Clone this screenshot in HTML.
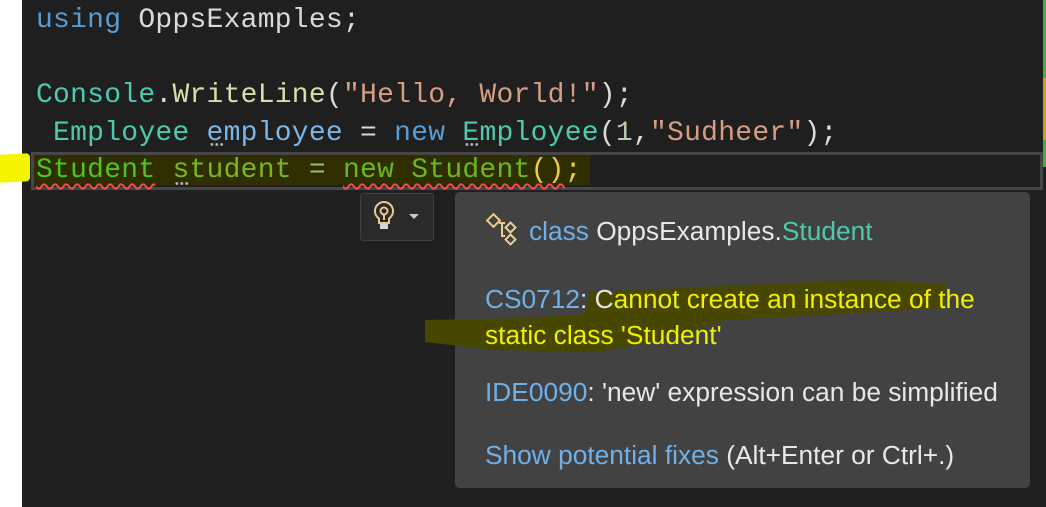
<!DOCTYPE html>
<html><head><style>
body{margin:0;width:1046px;height:507px;overflow:hidden;background:#fff;position:relative;font-family:"Liberation Sans",sans-serif}
#ed{position:absolute;left:22px;top:0;width:1024px;height:507px;background:#1f1f1f}
.ln{position:absolute;left:36px;font-family:"Liberation Mono",monospace;font-size:28px;letter-spacing:0.25px;white-space:pre;line-height:36px}
.kw{color:#569cd6}.ty{color:#4ec9b0}.fn{color:#dcdcaa}.st{color:#d69d85}.id{color:#dadada}.va{color:#9cdcfe}.lv{color:#7ab6e8}
.sq{text-decoration:underline wavy #f14c4c;text-decoration-thickness:1.5px;text-underline-offset:6px}
#pop{position:absolute;left:455px;top:192px;width:575px;height:296px;background:#424242;border-radius:5px}
.pt{position:absolute;left:30px;font-size:26.3px;color:#e8e8e8;white-space:nowrap}
.b{color:#6fb0e8}
.dt{position:absolute;color:#aaa;font-size:11px;letter-spacing:1px}
</style></head><body>
<div id="ed"></div>
<div style="position:absolute;left:0;top:154px;width:30px;height:28px;background:#f5f500;border-radius:0 4px 4px 0;transform:skewY(-3deg)"></div>
<div style="position:absolute;left:31px;top:152px;width:1006px;height:32px;border:3px solid #464646"></div>
<div style="position:absolute;left:34px;top:155px;width:556px;height:30px;background:#2e2e00"></div>
<div style="position:absolute;left:1043px;top:0;width:3px;height:167px;background:#3fae3f"></div>
<div style="position:absolute;left:1043px;top:78px;width:3px;height:62px;background:#c8a020"></div>
<div class="ln" style="top:3px"><span class="kw">using</span> <span class="id">OppsExamples;</span></div>
<div class="ln" style="top:78px"><span class="ty">Console</span><span class="id">.</span><span class="fn">WriteLine</span><span class="id">(</span><span class="st">"Hello, World!"</span><span class="id">);</span></div>
<div class="ln" style="top:116px"><span class="ty"> Employee</span> <span class="lv">employee</span> <span class="id">=</span> <span class="kw">new</span> <span class="ty">Employee</span><span class="id">(</span><span style="color:#b5cea8">1</span><span class="id">,</span><span class="st">"Sudheer"</span><span class="id">);</span></div>
<div class="ln" style="top:153px"><span class="sq" style="color:#4ec41e">Student</span> <span style="color:#7ab61e">student</span> <span class="id" style="color:#9fbe6e">=</span> <span class="sq" style="color:#6ab81e">new Student<span style="color:#e8d040">()</span></span><span style="color:#e8d040">;</span></div>
<div class="dt" style="left:210px;top:139px">•••</div>
<div class="dt" style="left:465px;top:139px">•••</div>
<div class="dt" style="left:175px;top:178px">•••</div>
<div style="position:absolute;left:360px;top:193px;width:72px;height:46px;background:#2a2a2a;border:1px solid #3e3e3e;border-radius:3px"></div>
<svg style="position:absolute;left:368px;top:198px" width="60" height="36" viewBox="0 0 60 36">
<path d="M16 4a9 9 0 0 0-5 16.5V25h10v-4.5A9 9 0 0 0 16 4z" fill="none" stroke="#e8c890" stroke-width="2"/>
<circle cx="16" cy="13" r="3.5" fill="none" stroke="#e8c890" stroke-width="2"/>
<path d="M16 16.5V22" stroke="#e8c890" stroke-width="2"/>
<rect x="12" y="26" width="8" height="5" fill="#d8d8d8"/>
<path d="M41 16l5 5 5-5z" fill="#c8c8c8"/>
</svg>
<div id="pop">
<svg style="position:absolute;left:30px;top:20px" width="36" height="36" viewBox="0 0 36 36" fill="none" stroke="#eccf8a" stroke-width="2">
<rect x="4" y="4" width="9" height="9" transform="rotate(45 8.5 8.5)"/>
<rect x="22" y="12" width="7" height="7" transform="rotate(45 25.5 15.5)"/>
<rect x="22" y="24" width="7" height="7" transform="rotate(45 25.5 27.5)"/>
<path d="M14 11h6M17 11v13h3"/>
</svg>
<svg style="position:absolute;left:-30px;top:88px" width="560" height="80">
<path d="M165 12 L440 0 L520 4 L520 28 L300 40 L240 60 L170 72 L70 70 L0 62 L0 40 L100 38 L160 34 Z" fill="#474700"/>
</svg>
<div class="pt" style="top:24px;left:74px"><span class="b">class</span> OppsExamples.<span style="color:#4ec9b0">Student</span></div>
<div class="pt" style="top:92px"><span class="b">CS0712</span>: C<span style="color:#f0f000">annot create an instance of the</span></div>
<div class="pt" style="top:128px;color:#f0f000">static class 'Student'</div>
<div class="pt" style="top:185px"><span class="b">IDE0090</span>: 'new' expression can be simplified</div>
<div class="pt" style="top:248px"><span class="b">Show potential fixes</span> (Alt+Enter or Ctrl+.)</div>
</div>
</body></html>
